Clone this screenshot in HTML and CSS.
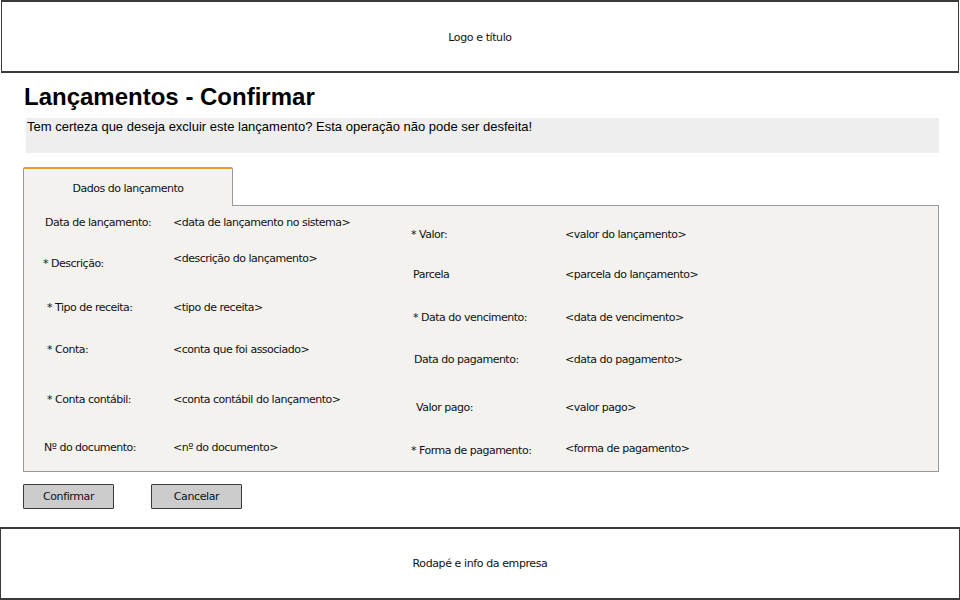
FILE: index.html
```html
<!DOCTYPE html>
<html lang="pt-BR">
<head>
<meta charset="utf-8">
<title>Lançamentos - Confirmar</title>
<link rel="stylesheet" href="styles.css">
</head>
<body>
  <header class="sketch-box header">Logo e título</header>
  <main class="main">
    <h1 class="title">Lançamentos - Confirmar</h1>
    <div class="message">Tem certeza que deseja excluir este lançamento? Esta operação não pode ser desfeita!</div>
    <div class="tabs">
      <div class="tab">Dados do lançamento</div>
    </div>
    <section class="panel">
      <div class="col col-left">
        <div class="row"><span class="label">Data de lançamento:</span><span class="value">&lt;data de lançamento no sistema&gt;</span></div>
        <div class="row"><span class="label lower">* Descrição:</span><span class="value">&lt;descrição do lançamento&gt;</span></div>
        <div class="row"><span class="label">* Tipo de receita:</span><span class="value">&lt;tipo de receita&gt;</span></div>
        <div class="row"><span class="label">* Conta:</span><span class="value">&lt;conta que foi associado&gt;</span></div>
        <div class="row"><span class="label">* Conta contábil:</span><span class="value">&lt;conta contábil do lançamento&gt;</span></div>
        <div class="row"><span class="label">Nº do documento:</span><span class="value">&lt;nº do documento&gt;</span></div>
      </div>
      <div class="col col-right">
        <div class="row"><span class="label">* Valor:</span><span class="value">&lt;valor do lançamento&gt;</span></div>
        <div class="row"><span class="label">Parcela</span><span class="value">&lt;parcela do lançamento&gt;</span></div>
        <div class="row"><span class="label">* Data do vencimento:</span><span class="value">&lt;data de vencimento&gt;</span></div>
        <div class="row"><span class="label">Data do pagamento:</span><span class="value">&lt;data do pagamento&gt;</span></div>
        <div class="row"><span class="label">Valor pago:</span><span class="value">&lt;valor pago&gt;</span></div>
        <div class="row"><span class="label">* Forma de pagamento:</span><span class="value">&lt;forma de pagamento&gt;</span></div>
      </div>
    </section>
    <div class="actions">
      <button class="btn">Confirmar</button>
      <button class="btn">Cancelar</button>
    </div>
  </main>
  <footer class="sketch-box footer">Rodapé e info da empresa</footer>
</body>
</html>
```

FILE: styles.css
```css
* { box-sizing: border-box; }

html, body {
  margin: 0;
  padding: 0;
  background: #ffffff;
}

body {
  width: 960px;
  height: 600px;
  overflow: hidden;
  font-family: "Liberation Sans", Arial, sans-serif;
  color: #111;
}

.sketch-box {
  display: flex;
  align-items: center;
  justify-content: center;
  border: 1px solid #3a3a3a;
  border-top-width: 2px;
  border-bottom-width: 2px;
  font-family: "DejaVu Sans", sans-serif;
  font-size: 11px;
  letter-spacing: -0.4px;
  color: #111;
  background: #fff;
}

.header {
  height: 73px;
  margin: 0 1px 0 1px;
  padding-top: 1px;
}

.footer {
  height: 73px;
  margin: 18px 0 0 0;
  padding-bottom: 1px;
}

.main {
  padding: 0 0 0 23px;
}

.title {
  margin: 10px 0 0 1px;
  font-size: 24px;
  line-height: 28px;
  font-weight: bold;
  color: #000;
}

.message {
  margin: 7px 0 0 3px;
  width: 913px;
  height: 35px;
  padding: 1px 0 0 1px;
  background: #eeeeee;
  font-size: 13px;
  line-height: 16px;
  color: #000;
}

.tabs {
  display: flex;
  margin-top: 14px;
}

.tab {
  width: 210px;
  height: 39px;
  border: 1px solid #999;
  border-top: 2px solid #f09a2e;
  border-bottom: none;
  border-radius: 2px 2px 0 0;
  background: #f3f2ee;
  display: flex;
  align-items: center;
  justify-content: center;
  padding-top: 2px;
  font-family: "DejaVu Sans", sans-serif;
  font-size: 11px;
  letter-spacing: -0.5px;
  margin-bottom: -1px;
  position: relative;
  z-index: 1;
}

.panel {
  width: 916px;
  height: 267px;
  border: 1px solid #999;
  background: #f3f2ee;
  display: flex;
  font-family: "DejaVu Sans", sans-serif;
  font-size: 11px;
  letter-spacing: -0.5px;
  color: #111;
}

.col {
  display: flex;
  flex-direction: column;
}

.row {
  display: flex;
  align-items: flex-start;
  line-height: 16px;
  white-space: nowrap;
}

.col-left {
  width: 366px;
  padding: 9px 0 0 21px;
}

.col-left .label { width: 128px; }

.col-left .row:nth-child(2) { margin-top: 20px; }
.col-left .row:nth-child(3) { margin-top: 28px; }
.col-left .row:nth-child(4) { margin-top: 26px; }
.col-left .row:nth-child(5) { margin-top: 34px; }
.col-left .row:nth-child(6) { margin-top: 32px; }

.col-left .row:nth-child(2) .label { margin-left: -2px; width: 130px; }
.col-left .row:nth-child(3) .label,
.col-left .row:nth-child(4) .label,
.col-left .row:nth-child(5) .label { margin-left: 2px; width: 126px; }
.col-left .row:nth-child(6) .label { margin-left: -1px; width: 129px; }

.lower { padding-top: 5px; }

.col-right {
  padding: 21px 0 0 21px;
}

.col-right .label { width: 154px; }

.col-right .row:nth-child(2) { margin-top: 24px; }
.col-right .row:nth-child(3) { margin-top: 27px; }
.col-right .row:nth-child(4) { margin-top: 26px; }
.col-right .row:nth-child(5) { margin-top: 32px; }
.col-right .row:nth-child(6) { margin-top: 25px; }

.col-right .row:nth-child(2) .label,
.col-right .row:nth-child(3) .label { margin-left: 2px; width: 152px; }
.col-right .row:nth-child(4) .label { margin-left: 3px; width: 151px; }
.col-right .row:nth-child(5) .label { margin-left: 5px; width: 149px; }
.col-right .row:nth-child(6) .label { padding-top: 2px; }

.actions {
  display: flex;
  gap: 37px;
  margin-top: 12px;
}

.btn {
  width: 91px;
  height: 25px;
  margin: 0;
  padding: 0;
  border: 1px solid #3a3a3a;
  border-radius: 1px;
  background: #cccccc;
  font-family: "DejaVu Sans", sans-serif;
  font-size: 11px;
  letter-spacing: -0.4px;
  color: #111;
}
```
